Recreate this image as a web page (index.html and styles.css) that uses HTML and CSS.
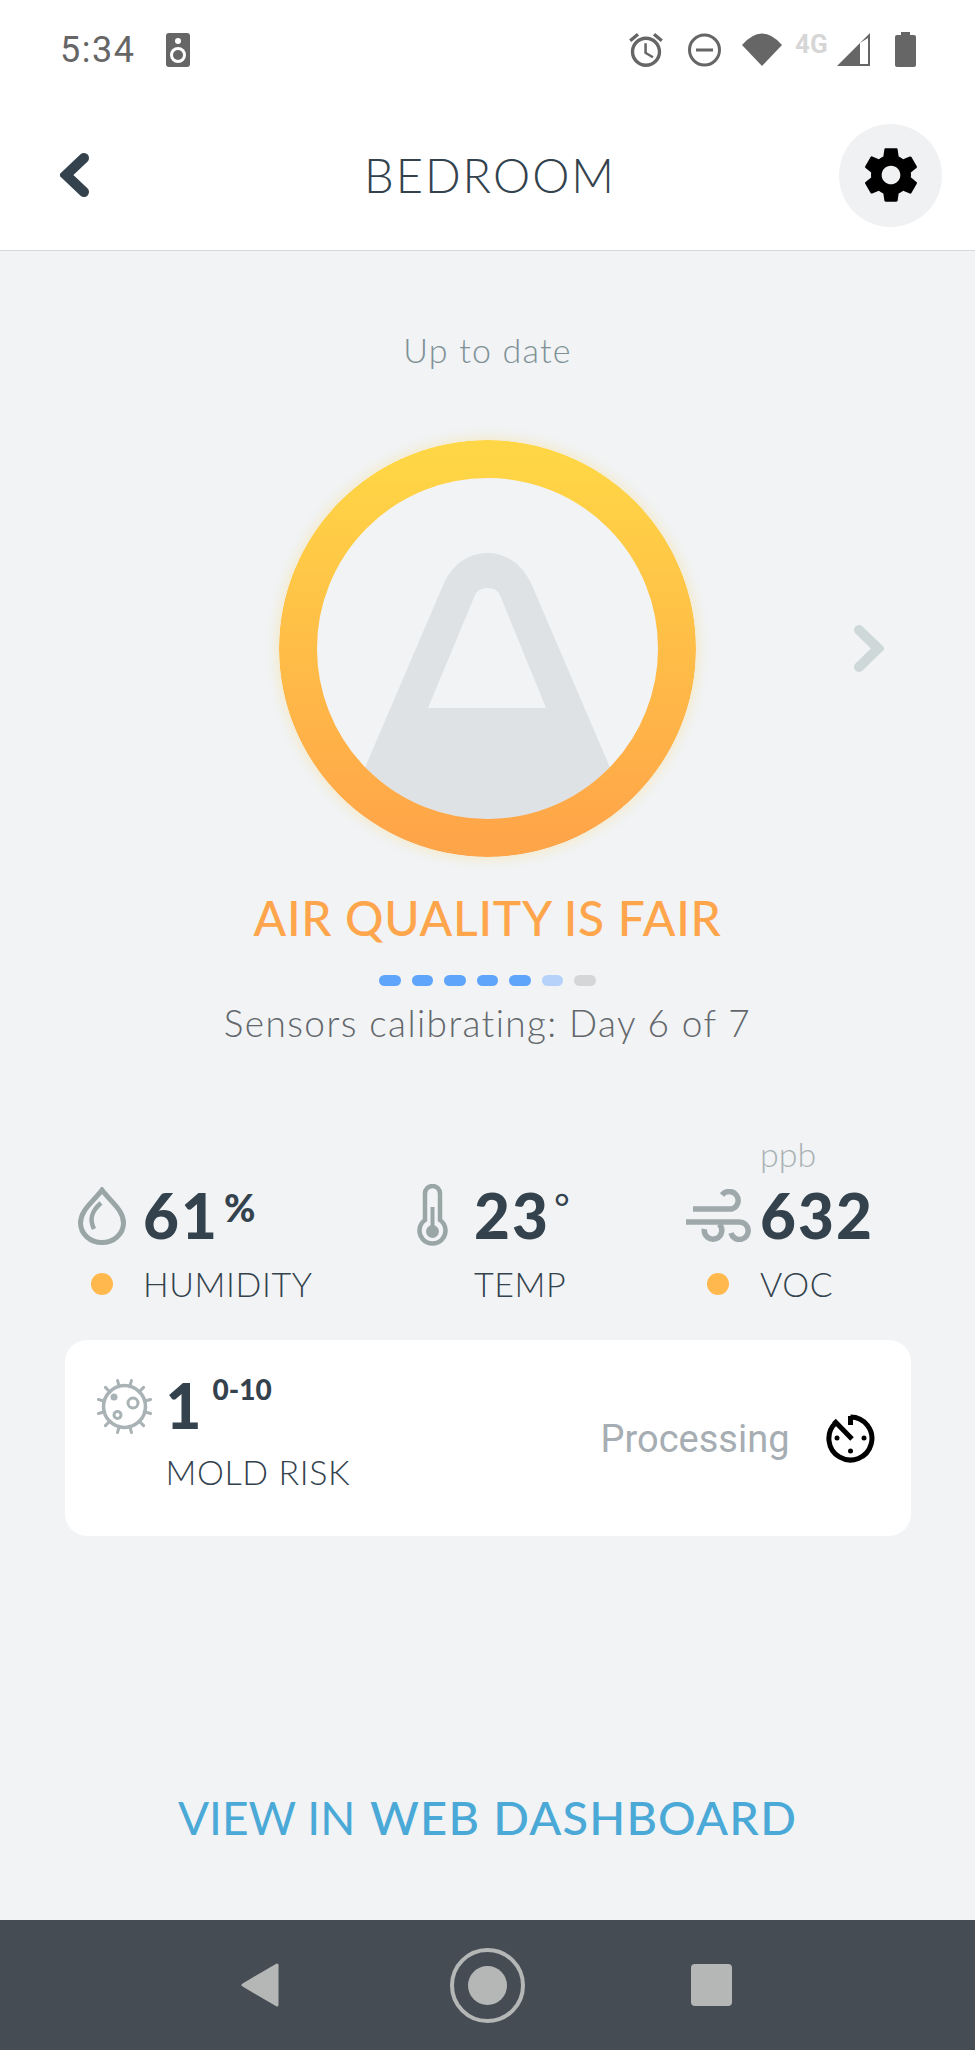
FILE: index.html
```html
<!DOCTYPE html>
<html lang="en">
<head>
    <meta charset="UTF-8">
    <meta name="viewport" content="width=device-width, initial-scale=1.0">
    <title>Bedroom</title>
    <link rel="stylesheet" href="styles.css">
</head>
<body>
    <div class="phone">
        <div class="status-bar">
            <div class="status-left">
                <span class="time">5:34</span>
                <svg width="24" height="34" viewBox="0 0 24 34">
                    <rect width="24" height="34" rx="3" fill="#666"/>
                    <circle cx="12" cy="8" r="3" fill="#fff"/>
                    <circle cx="12" cy="22" r="8" fill="#fff"/>
                    <circle cx="12" cy="22" r="5" fill="#666"/>
                </svg>
            </div>
            <div class="status-right">
                <svg class="icon-alarm" width="34" height="34" viewBox="2 1.86 20 20.14" fill="#666">
                    <path d="M22 5.72l-4.6-3.86-1.29 1.53 4.6 3.86L22 5.72zM7.88 3.39L6.6 1.86 2 5.71l1.29 1.53 4.59-3.85zM12.5 8H11v6l4.75 2.85.75-1.23-4-2.37V8zM12 4c-4.97 0-9 4.03-9 9s4.03 9 9 9 9-4.03 9-9-4.03-9-9-9zm0 16c-3.87 0-7-3.13-7-7s3.13-7 7-7 7 3.13 7 7-3.13 7-7 7z"/>
                </svg>
                <svg class="icon-dnd" width="33" height="34" viewBox="0 0 33 34">
                    <circle cx="16.5" cy="17" r="15" fill="none" stroke="#666" stroke-width="3"/>
                    <rect x="8" y="15.5" width="17" height="3" fill="#666"/>
                </svg>
                <svg class="icon-wifi" width="40" height="33" viewBox="0 0 40 33">
                    <path d="M0 12 Q20 -11 40 12 L20 33 Z" fill="#666"/>
                </svg>
                <span class="network">4G</span>
                <svg class="icon-signal" width="33" height="33" viewBox="0 0 33 33">
                    <path d="M33 0 V33 H0 Z" fill="#666"/>
                    <path d="M23 10 L31 5 V31 H23 Z" fill="#fff"/>
                </svg>
                <svg class="icon-battery" width="21" height="35" viewBox="0 0 21 35">
                    <path d="M6 0 H15 V3 H19 Q21 3 21 5 V33 Q21 35 19 35 H2 Q0 35 0 33 V5 Q0 3 2 3 H6 Z" fill="#666"/>
                </svg>
            </div>
        </div>

        <div class="header">
            <div class="back">
                <svg width="29" height="44" viewBox="0 0 29 44">
                    <path d="M24 5 L6 22 L24 39" fill="none" stroke="#33424d" stroke-width="10" stroke-linecap="round"/>
                </svg>
            </div>
            <h1 class="title">BEDROOM</h1>
            <div class="settings">
                <svg width="64" height="64" viewBox="0 0 24 24">
                    <path d="M19.43 12.98c.04-.32.07-.64.07-.98s-.03-.66-.07-.98l2.11-1.65c.19-.15.24-.42.12-.64l-2-3.46c-.12-.22-.39-.3-.61-.22l-2.49 1c-.52-.4-1.08-.73-1.69-.98l-.38-2.65C14.46 2.18 14.25 2 14 2h-4c-.25 0-.46.18-.49.42l-.38 2.65c-.61.25-1.17.59-1.69.98l-2.49-1c-.23-.09-.49 0-.61.22l-2 3.46c-.13.22-.07.49.12.64l2.11 1.65c-.04.32-.07.65-.07.98s.03.66.07.98l-2.11 1.65c-.19.15-.24.42-.12.64l2 3.46c.12.22.39.3.61.22l2.49-1c.52.4 1.08.73 1.69.98l.38 2.65c.03.24.24.42.49.42h4c.25 0 .46-.18.49-.42l.38-2.65c.61-.25 1.17-.59 1.69-.98l2.49 1c.23.09.49 0 .61-.22l2-3.46c.12-.22.07-.49-.12-.64l-2.01-1.65zM12 15.5c-1.93 0-3.5-1.57-3.5-3.5s1.57-3.5 3.5-3.5 3.5 1.57 3.5 3.5-1.57 3.5-3.5 3.5z"/>
                </svg>
            </div>
        </div>

        <div class="main">
            <div class="updated">Up to date</div>

            <div class="hero">
                <svg class="ring" width="417" height="417" viewBox="0 0 417 417">
                    <defs>
                        <linearGradient id="ring-fill" x1="0" y1="0" x2="0" y2="1">
                            <stop offset="0" stop-color="#ffd645"/>
                            <stop offset="1" stop-color="#ffa549"/>
                        </linearGradient>
                        <clipPath id="ring-inner">
                            <circle cx="208.5" cy="208.5" r="171"/>
                        </clipPath>
                    </defs>
                    <path clip-path="url(#ring-inner)" fill="#dfe2e5" fill-rule="evenodd" d="M55 400 L165 143 C175 122 192 113 208.5 113 C225 113 242 122 252 143 L362 400 Z M149 268 L196 155 Q199 148 208.5 148 Q218 148 221 155 L267 268 Z"/>
                    <circle cx="208.5" cy="208.5" r="189.5" fill="none" stroke="url(#ring-fill)" stroke-width="38"/>
                </svg>
                <svg class="next" width="31" height="49" viewBox="0 0 31 49">
                    <path d="M6 6 L25 24.5 L6 43" fill="none" stroke="#cfd8d8" stroke-width="10" stroke-linecap="round"/>
                </svg>
            </div>

            <div class="quality">AIR QUALITY IS FAIR</div>
            <div class="calibration">
                <span class="step"></span>
                <span class="step"></span>
                <span class="step"></span>
                <span class="step"></span>
                <span class="step"></span>
                <span class="step step-current"></span>
                <span class="step step-todo"></span>
            </div>
            <div class="calibration-text">Sensors calibrating: Day 6 of 7</div>

            <div class="stats">
                <div class="stat stat-humidity">
                    <svg class="stat-icon" width="48" height="58" viewBox="0 0 48 58">
                        <path d="M24 3 C15 15 2.5 23 2.5 36 a21.5 19.5 0 0 0 43 0 C45.5 23 33 15 24 3 Z" fill="none" stroke="#9aa6a6" stroke-width="5"/>
                        <path d="M23 16 C16 22 10 30 16 42" fill="none" stroke="#9aa6a6" stroke-width="4.5"/>
                    </svg>
                    <div class="stat-value">61<span class="suffix">%</span></div>
                    <div class="stat-dot"></div>
                    <div class="stat-label">HUMIDITY</div>
                </div>
                <div class="stat stat-temp">
                    <svg class="stat-icon" width="31" height="64" viewBox="0 0 31 64">
                        <path d="M8 36 V9.5 a7.5 7.5 0 0 1 15 0 V36 a13 13 0 1 1 -15 0 Z" fill="none" stroke="#9aa6a6" stroke-width="4.5"/>
                        <path d="M15.5 23 V46" stroke="#9aa6a6" stroke-width="4"/>
                        <circle cx="15.5" cy="47.5" r="6.5" fill="#9aa6a6"/>
                    </svg>
                    <div class="stat-value">23<span class="suffix degree">°</span></div>
                    <div class="stat-label">TEMP</div>
                </div>
                <div class="stat stat-voc">
                    <div class="stat-unit">ppb</div>
                    <svg class="stat-icon" width="65" height="53" viewBox="0 0 65 53">
                        <path d="M7 20 H46 a9 9 0 1 0 -10 -14" fill="none" stroke="#9fa9ab" stroke-width="5.5"/>
                        <path d="M0 33 H53.5 a8.75 8.75 0 1 1 -8.500 11" fill="none" stroke="#9fa9ab" stroke-width="5.5"/>
                        <path d="M33 35 A8.75 8.75 0 1 1 18.4 40" fill="none" stroke="#9fa9ab" stroke-width="5.5"/>
                    </svg>
                    <div class="stat-value">632</div>
                    <div class="stat-dot"></div>
                    <div class="stat-label">VOC</div>
                </div>
            </div>

            <div class="card">
                <svg class="mold-icon" width="59" height="57" viewBox="0 0 59 57">
                    <g stroke="#a9b2b5" stroke-width="3" stroke-linecap="round">
                        <line x1="29.5" y1="1.5" x2="29.5" y2="8" transform="rotate(15 29.5 28.5)"/>
                        <line x1="29.5" y1="1.5" x2="29.5" y2="8" transform="rotate(45 29.5 28.5)"/>
                        <line x1="29.5" y1="1.5" x2="29.5" y2="8" transform="rotate(75 29.5 28.5)"/>
                        <line x1="29.5" y1="1.5" x2="29.5" y2="8" transform="rotate(105 29.5 28.5)"/>
                        <line x1="29.5" y1="1.5" x2="29.5" y2="8" transform="rotate(135 29.5 28.5)"/>
                        <line x1="29.5" y1="1.5" x2="29.5" y2="8" transform="rotate(165 29.5 28.5)"/>
                        <line x1="29.5" y1="1.5" x2="29.5" y2="8" transform="rotate(195 29.5 28.5)"/>
                        <line x1="29.5" y1="1.5" x2="29.5" y2="8" transform="rotate(225 29.5 28.5)"/>
                        <line x1="29.5" y1="1.5" x2="29.5" y2="8" transform="rotate(255 29.5 28.5)"/>
                        <line x1="29.5" y1="1.5" x2="29.5" y2="8" transform="rotate(285 29.5 28.5)"/>
                        <line x1="29.5" y1="1.5" x2="29.5" y2="8" transform="rotate(315 29.5 28.5)"/>
                        <line x1="29.5" y1="1.5" x2="29.5" y2="8" transform="rotate(345 29.5 28.5)"/>
                    </g>
                    <circle cx="29.5" cy="28.5" r="21" fill="none" stroke="#a9b2b5" stroke-width="3.5"/>
                    <circle cx="38" cy="25" r="5" fill="none" stroke="#a9b2b5" stroke-width="3"/>
                    <circle cx="22.5" cy="37" r="3.5" fill="none" stroke="#a9b2b5" stroke-width="3"/>
                    <circle cx="19" cy="19" r="3.5" fill="#a9b2b5"/>
                </svg>
                <div class="mold-info">
                    <div class="mold-value">1<span class="mold-range">0-10</span></div>
                    <div class="stat-label">MOLD RISK</div>
                </div>
                <div class="processing">
                    <span class="processing-text">Processing</span>
                    <svg width="49" height="49" viewBox="0 0 49 49">
                        <path d="M24.5 3 A21.5 21.5 0 1 1 9.5 9" fill="none" stroke="#000" stroke-width="5"/>
                        <path d="M24.5 2 V11 M8 6.5 L26 25" fill="none" stroke="#000" stroke-width="5"/>
                        <circle cx="11" cy="24" r="2.5"/>
                        <circle cx="38" cy="24" r="2.5"/>
                        <circle cx="24.5" cy="37" r="2.5"/>
                    </svg>
                </div>
            </div>

            <div class="dashboard-link">VIEW IN <b>WEB DASHBOARD</b></div>
        </div>

        <div class="nav-bar">
            <svg class="nav-back" width="38" height="44" viewBox="0 0 38 44">
                <path d="M36 2 V42 L2 22 Z" fill="#b5b7b7" stroke="#b5b7b7" stroke-width="3" stroke-linejoin="round"/>
            </svg>
            <svg class="nav-home" width="75" height="75" viewBox="0 0 75 75">
                <circle cx="37.5" cy="37.5" r="35.5" fill="none" stroke="#b5b7b7" stroke-width="4"/>
                <circle cx="37.5" cy="37.5" r="19.5" fill="#b5b7b7"/>
            </svg>
            <div class="nav-recent"></div>
        </div>
    </div>
</body>
</html>
```

FILE: styles.css
```css
body {
    margin: 0;
    font-family: "Lato", "Open Sans", sans-serif;
    color: #33424d;
}
.phone {
    width: 975px;
    height: 2050px;
    display: flex;
    flex-direction: column;
    background: #f1f3f5;
    overflow: hidden;
}

/* status bar */
.status-bar {
    height: 100px;
    background: #fff;
    display: flex;
    justify-content: space-between;
    align-items: center;
    padding: 0 59px 0 60px;
}
.status-left {
    display: flex;
    align-items: center;
    gap: 31px;
}
.time {
    font-family: "Roboto", sans-serif;
    font-size: 36px;
    line-height: 40px;
    color: #666;
    letter-spacing: 1.5px;
}
.status-right {
    display: flex;
    align-items: flex-start;
}
.icon-dnd { margin-left: 25px; }
.icon-wifi { margin-left: 21px; }
.network {
    font-family: "Roboto", sans-serif;
    font-weight: 700;
    font-size: 26px;
    line-height: 22px;
    width: 35px;
    margin-left: 13px;
    color: #d6d6d6;
}
.icon-signal { margin-left: 7px; }
.icon-battery { margin-left: 25px; margin-top: -1px; }

/* header */
.header {
    height: 150px;
    background: #fff;
    border-bottom: 1px solid #d6d8d8;
    display: grid;
    grid-template-columns: 1fr auto 1fr;
    align-items: center;
    padding: 0 33px 0 38px;
}
.back {
    margin-left: 22px;
}
.back svg { display: block; }
.title {
    margin: 0;
    font-size: 47px;
    font-weight: 300;
    line-height: 50px;
    letter-spacing: 2px;
}
.settings {
    justify-self: end;
    width: 103px;
    height: 103px;
    border-radius: 50%;
    background: #f0f1f2;
    display: flex;
    justify-content: center;
    align-items: center;
}

/* air quality */
.main {
    flex: 1;
    display: flex;
    flex-direction: column;
    align-items: center;
}
.updated {
    margin-top: 79px;
    font-size: 34px;
    font-weight: 300;
    line-height: 40px;
    letter-spacing: 1.2px;
    color: #7f9195;
}
.hero {
    margin-top: 70px;
    width: 100%;
    display: grid;
    grid-template-columns: 1fr 417px 1fr;
    align-items: center;
}
.ring {
    grid-column: 2;
    border-radius: 50%;
    box-shadow: 0 0 14px rgba(255, 214, 90, 0.4);
}
.next {
    margin-left: 157px;
}
.quality {
    margin-top: 36px;
    font-size: 48px;
    font-weight: 500;
    line-height: 50px;
    letter-spacing: 0.7px;
    color: #ffa54c;
}
.calibration {
    margin-top: 32px;
    display: flex;
    gap: 11px;
}
.step {
    width: 21.5px;
    height: 11px;
    border-radius: 6px;
    background: #5fa5fb;
}
.step-current { background: #b6d2fb; }
.step-todo { background: #d4d6d8; }
.calibration-text {
    margin-top: 17px;
    font-size: 37px;
    font-weight: 300;
    line-height: 40px;
    letter-spacing: 1.4px;
    color: #63676b;
}

/* readings */
.stats {
    margin-top: 93px;
    width: 100%;
    box-sizing: border-box;
    padding-left: 78px;
    display: grid;
    grid-template-columns: 339px 269px 1fr;
}
.stat {
    display: grid;
    grid-template-rows: 42px 75px 11px 40px;
    align-items: center;
}
.stat-humidity { grid-template-columns: 65px auto; }
.stat-temp { grid-template-columns: 57px auto; }
.stat-voc { grid-template-columns: 74px auto; }
.stat-unit {
    grid-column: 2;
    grid-row: 1;
    font-size: 34px;
    font-weight: 300;
    line-height: 40px;
    margin-bottom: 6px;
    color: #a9b2b4;
}
.stat-icon {
    grid-column: 1;
    grid-row: 2;
}
.stat-value {
    grid-column: 2;
    grid-row: 2;
    font-size: 62px;
    font-weight: 900;
    line-height: 75px;
    letter-spacing: 2px;
}
.suffix {
    font-size: 38px;
    font-weight: 900;
    line-height: 0;
    vertical-align: 17px;
    margin-left: 5px;
}
.degree { font-weight: 400; margin-left: 4px; }
.stat-dot {
    grid-column: 1;
    grid-row: 4;
    width: 22px;
    height: 22px;
    border-radius: 50%;
    background: #ffb84d;
}
.stat-humidity .stat-dot { margin-left: 13px; }
.stat-voc .stat-dot { margin-left: 21px; }
.stat-label {
    grid-column: 2;
    grid-row: 4;
    font-size: 34px;
    font-weight: 300;
    line-height: 40px;
    letter-spacing: 0.6px;
}

/* mold card */
.card {
    margin-top: 36px;
    width: 846px;
    height: 196px;
    box-sizing: border-box;
    background: #fff;
    border-radius: 22px;
    display: flex;
    align-items: flex-start;
    padding: 38px 36px 0 30px;
}
.mold-info { margin: -3px 0 0 12px; }
.mold-value {
    font-size: 62px;
    font-weight: 900;
    line-height: 60px;
}
.mold-range {
    font-size: 28px;
    line-height: 0;
    margin-left: 11px;
    vertical-align: 29px;
}
.card .stat-label { margin-top: 17px; }
.processing {
    margin-left: auto;
    margin-top: 36px;
    display: flex;
    align-items: center;
    gap: 36px;
}
.processing-text {
    font-family: "Roboto", sans-serif;
    font-size: 38px;
    color: #a6adb3;
}
.processing svg { display: block; }

.dashboard-link {
    margin-top: auto;
    margin-bottom: 77px;
    font-size: 46px;
    font-weight: 400;
    line-height: 50px;
    color: #4aa9d6;
}
.dashboard-link b {
    font-size: 47px;
    font-weight: 500;
    letter-spacing: 1.2px;
    margin-left: 3px;
}

/* android nav */
.nav-bar {
    height: 130px;
    background: #454c53;
    display: flex;
    align-items: center;
    padding-left: 241px;
}
.nav-home { margin-left: 171px; }
.nav-recent {
    margin-left: 166px;
    width: 41px;
    height: 42px;
    border-radius: 4px;
    background: #b5b7b7;
}
```
